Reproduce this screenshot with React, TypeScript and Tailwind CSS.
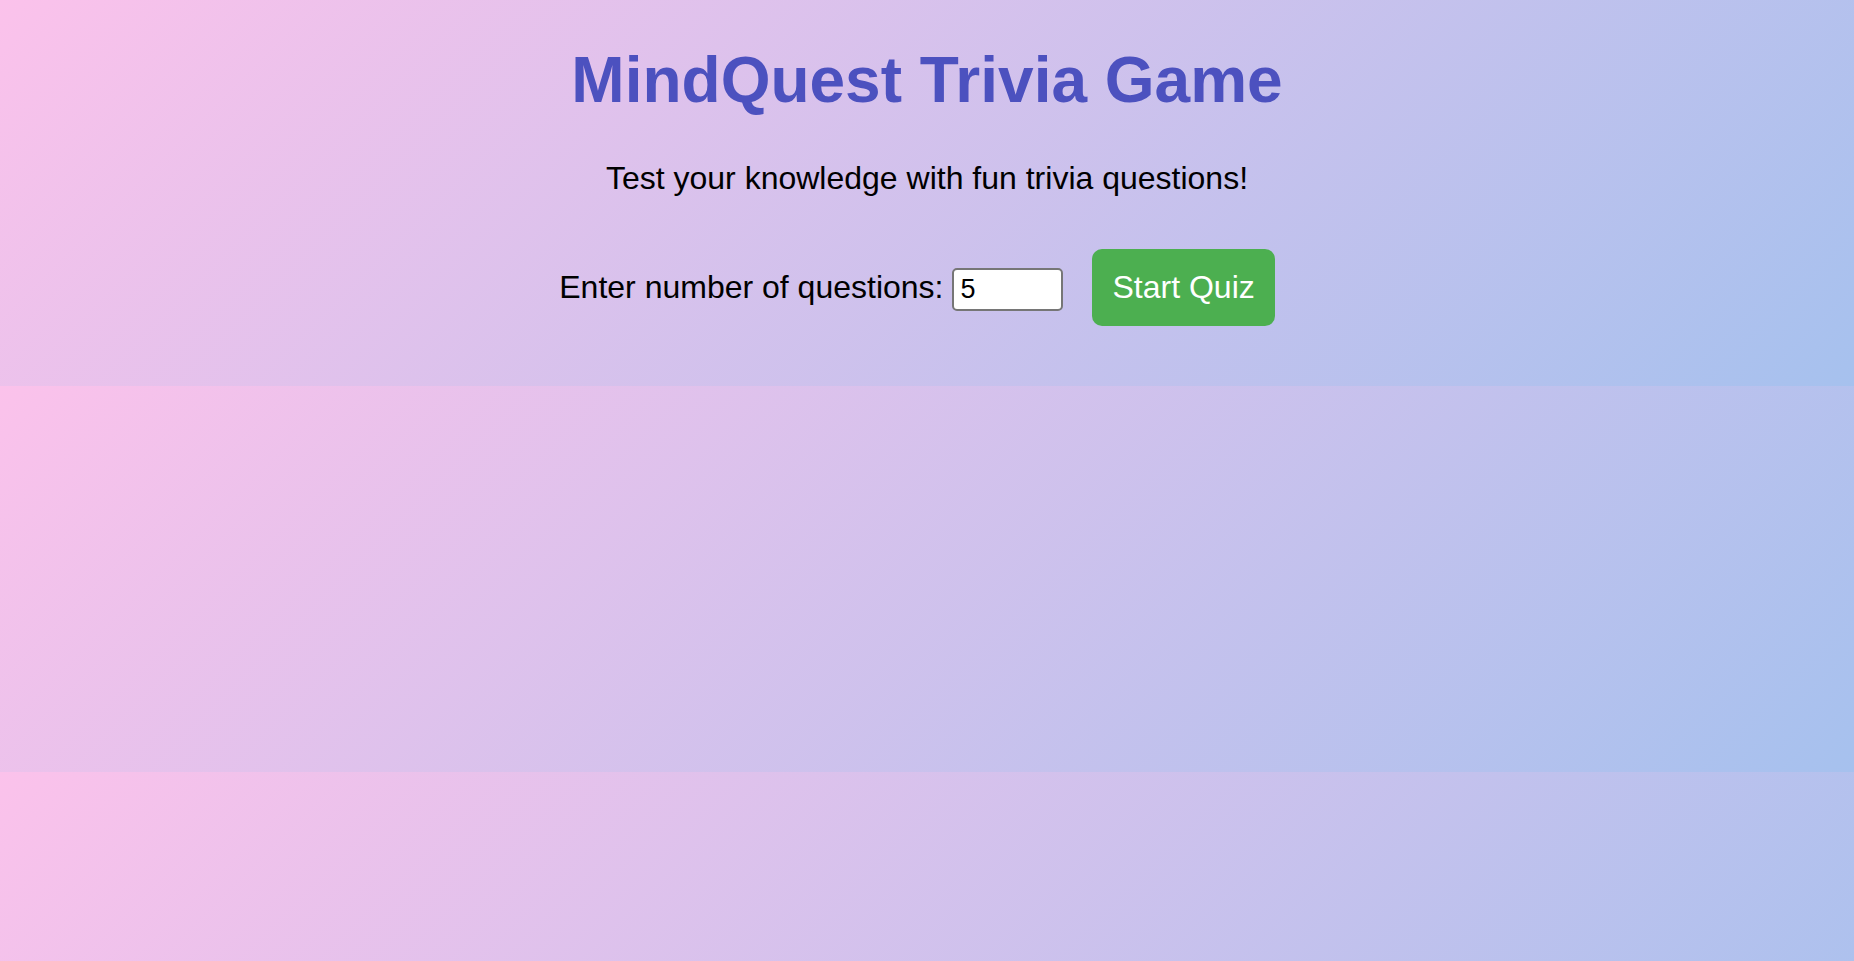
import { useState } from "react";

export default function App() {
  const [count, setCount] = useState("5");

  return (
    <main className="min-h-screen bg-[linear-gradient(135deg,#fbc2eb,#a6c1ee)] bg-[length:100%_386px] bg-repeat-y px-10 pt-[43px] pb-10 text-center font-['Liberation_Sans',Arial,sans-serif] text-[32px] leading-[37px] text-black">
      <h1 className="text-[64px] leading-[74px] font-bold text-[#4c51bf]">MindQuest Trivia Game</h1>
      <p className="mt-[43px]">Test your knowledge with fun trivia questions!</p>
      <form
        className="mt-8 flex flex-wrap items-baseline justify-center"
        onSubmit={(event) => event.preventDefault()}
      >
        <label htmlFor="question-count" className="mr-[9px]">
          Enter number of questions:
        </label>
        <input
          id="question-count"
          type="number"
          min="1"
          value={count}
          onChange={(event) => setCount(event.target.value)}
          className="h-[43px] w-[111px] rounded-[5px] border-2 border-[#767676] bg-white px-[6px] text-[27px] leading-[31px]"
        />
        <button
          type="submit"
          className="my-5 mr-5 ml-[29px] cursor-pointer rounded-[10px] bg-[#4caf50] p-5 text-white"
        >
          Start Quiz
        </button>
      </form>
    </main>
  );
}
